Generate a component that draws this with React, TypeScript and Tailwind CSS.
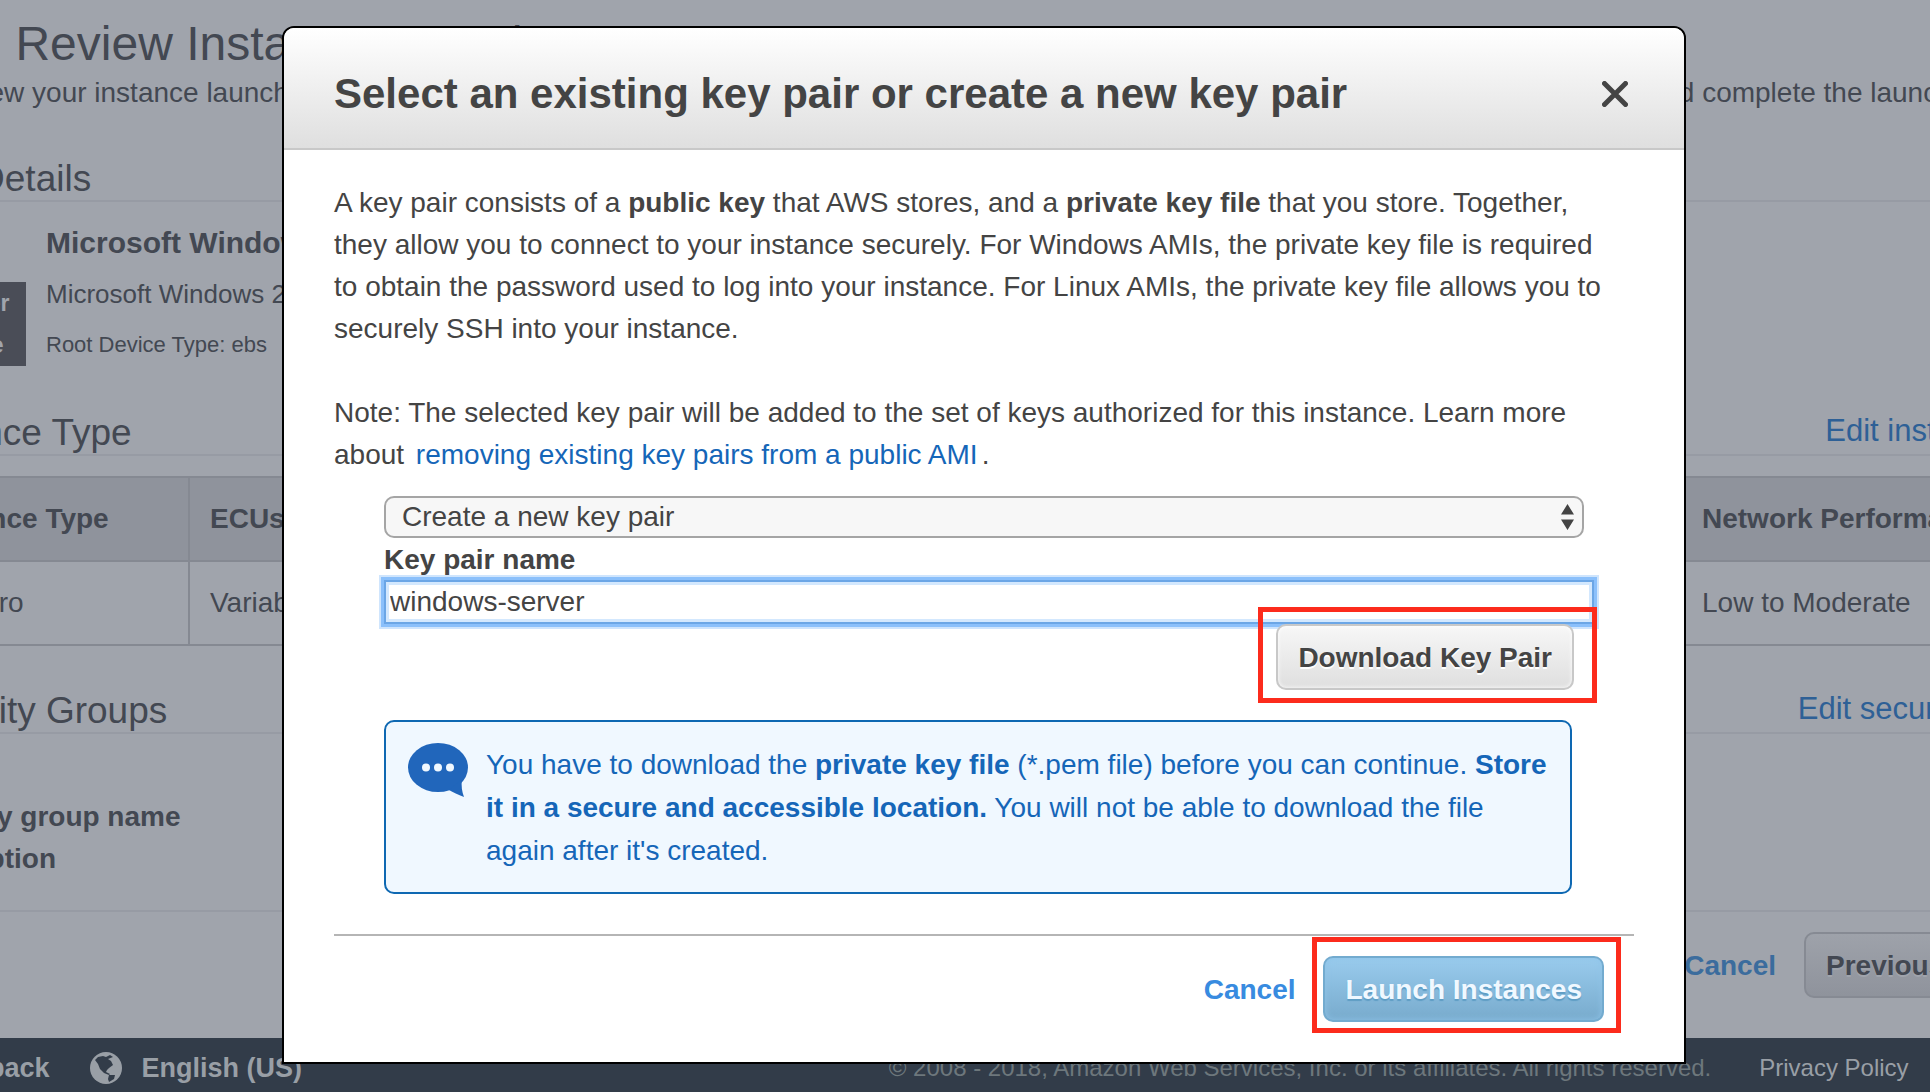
import type { ReactNode } from 'react';

const columns = [
  { label: 'Instance Type', value: 't2.micro', width: 'w-[286px]' },
  { label: 'ECUs', value: 'Variable', width: 'w-[200px]' },
  { label: 'vCPUs', value: '1', width: 'w-[200px]' },
  { label: 'Memory (GiB)', value: '1', width: 'w-[250px]' },
  { label: 'Instance Storage (GB)', value: 'EBS only', width: 'w-[400px]' },
  { label: 'EBS-Optimized Available', value: '-', width: 'w-[442px]' },
  { label: 'Network Performance', value: 'Low to Moderate', width: 'w-[390px]' },
];

function SectionHeading({ title, action }: { title: string; action?: string }) {
  return (
    <div className="flex h-[52px] items-end justify-between border-b-2 border-[#979ba4]">
      <h2 className="text-[37px] leading-[42px]">{title}</h2>
      {action && (
        <a href="#edit" className="text-[31px] leading-[46px] text-[#2e6096]">
          {action}
        </a>
      )}
    </div>
  );
}

function Highlight({ className, children }: { className: string; children: ReactNode }) {
  return (
    <div className="relative">
      {children}
      <div className={`pointer-events-none absolute border-5 border-[#fc2b1c] ${className}`} />
    </div>
  );
}

function CloseIcon() {
  return (
    <svg width="26" height="26" viewBox="0 0 26 26" fill="none" stroke="#444" strokeWidth="5" strokeLinecap="round">
      <path d="M2.500 2.500 23.500 23.500M23.500 2.500 2.500 23.500" />
    </svg>
  );
}

function SpeechIcon() {
  return (
    <svg width="60" height="54" viewBox="0 0 60 54" className="shrink-0">
      <ellipse cx="30" cy="24.500" rx="30" ry="24.500" fill="#2166bb" />
      <path d="M54 36C53 43 54 49 56 54C50 52 45 49 41 47Z" fill="#2166bb" />
      <g fill="#f0f8ff">
        <circle cx="18" cy="24.500" r="4" />
        <circle cx="30" cy="24.500" r="4" />
        <circle cx="42" cy="24.500" r="4" />
      </g>
    </svg>
  );
}

function GlobeIcon() {
  return (
    <svg width="32" height="32" viewBox="0 0 32 32">
      <circle cx="16" cy="16" r="16" fill="#999fa6" />
      <path
        d="M5 8 8 5 13 4 16 5 20 3 23 5 18 7 21 9 23 13 19 16 17 18 16 20 20 22 19 23 14 21 10 17 8 12Z"
        fill="#323c49"
      />
      <path d="M19 23 25 23 24 27 19 30 18 27Z" fill="#323c49" />
    </svg>
  );
}

function ReviewPage() {
  return (
    <div className="flex min-h-screen flex-col bg-[#a0a4ac] text-[#434852]">
      <main className="-mr-[140px] -ml-[150px]">
        <h1 className="pt-4 text-[48px] leading-[56px] whitespace-nowrap">Step 7: Review Instance Launch</h1>
        <p className="text-[28px] leading-[42px] whitespace-nowrap">
          Please review your instance launch details. You can go back to edit changes for each section. Click{' '}
          <b>Launch</b> to assign a key pair to your instance and complete the launch process.
        </p>

        <div className="pl-[52px]">
          <section className="h-[254px] pt-9">
            <SectionHeading title="AMI Details" />
            <div className="flex gap-5 pt-5">
              <div className="mt-[60px] flex h-[84px] w-[124px] shrink-0 items-center justify-center bg-[#4a4d57] text-center text-[23px] leading-[42px] font-bold text-[#a0a4ac]">
                Free tier
                <br />
                eligible
              </div>
              <div>
                <h3 className="text-[30px] leading-[42px] font-bold whitespace-nowrap">
                  Microsoft Windows Server 2016 Base
                </h3>
                <p className="pt-1 text-[26px] leading-[52px]">Microsoft Windows 2016 Datacenter edition.</p>
                <p className="text-[22px] leading-[50px]">Root Device Type: ebs</p>
              </div>
            </div>
          </section>

          <section className="pt-9">
            <SectionHeading title="Instance Type" action="Edit instance type" />
            <table className="mt-5 w-full table-fixed border-collapse border-y-2 border-[#858992] text-left text-[28px]">
              <thead className="bg-[#8f939c]">
                <tr>
                  {columns.map((column) => (
                    <th key={column.label} className={`h-[84px] border-2 border-[#858992] px-5 whitespace-nowrap ${column.width}`}>
                      {column.label}
                    </th>
                  ))}
                </tr>
              </thead>
              <tbody>
                <tr>
                  {columns.map((column) => (
                    <td key={column.label} className="h-[84px] border-2 border-[#858992] px-5">
                      {column.value}
                    </td>
                  ))}
                </tr>
              </tbody>
            </table>
          </section>

          <section className="pt-9">
            <SectionHeading title="Security Groups" action="Edit security groups" />
            <div className="h-[178px] border-b-2 border-[#979ba4] pt-[62px] text-[28px] leading-[42px] font-bold">
              <p>Security group name</p>
              <p>Description</p>
            </div>
          </section>
        </div>

        <div className="flex items-center justify-end gap-7 pt-5 text-[28px] font-bold">
          <a href="#cancel" className="pt-0.5 text-[#3b6c9d]">
            Cancel
          </a>
          <button className="h-[66px] w-[266px] rounded-[10px] border-2 border-[#868a93] bg-linear-to-b from-[#9ea2aa] to-[#8f939c] px-5 pt-0.5 text-left text-shadow-[0_2px_0_#a0a4ac]">
            Previous
          </button>
        </div>
      </main>

      <footer className="mt-auto -mr-[188px] -ml-[150px] flex h-[54px] items-center justify-between bg-[#323c49] pt-1.5 pr-5 pl-[75px] whitespace-nowrap text-[#999fa6]">
        <div className="flex items-center gap-10 text-[27px] font-bold">
          <a href="#feedback">Feedback</a>
          <a href="#language" className="flex items-center gap-5">
            <GlobeIcon />
            English (US)
          </a>
        </div>
        <div className="flex items-center gap-12 text-[24px]">
          <span className="text-[#6d777c]">
            © 2008 - 2018, Amazon Web Services, Inc. or its affiliates. All rights reserved.
          </span>
          <a href="#privacy">Privacy Policy</a>
          <a href="#terms">Terms of Use</a>
        </div>
      </footer>
    </div>
  );
}

function KeyPairDialog() {
  return (
    <div
      role="dialog"
      aria-labelledby="dialog-title"
      className="w-[1404px] max-w-full self-start rounded-t-[12px] border-2 border-black bg-white text-[28px] leading-[42px] text-[#444]"
    >
      <header className="flex h-[122px] items-center justify-between rounded-t-[10px] border-b-2 border-[#c8c8c8] bg-linear-to-b from-white to-[#dfdfdf] pt-3 pr-[56px] pl-[50px]">
        <h2 id="dialog-title" className="text-[42px] leading-[56px] font-bold">
          Select an existing key pair or create a new key pair
        </h2>
        <button aria-label="Close">
          <CloseIcon />
        </button>
      </header>

      <div className="px-[50px] pt-8">
        <p className="pr-5">
          A key pair consists of a <b>public key</b> that AWS stores, and a <b>private key file</b> that you store.
          Together, they allow you to connect to your instance securely. For Windows AMIs, the private key file is
          required to obtain the password used to log into your instance. For Linux AMIs, the private key file allows
          you to securely SSH into your instance.
        </p>
        <p className="pt-[42px] pr-5">
          Note: The selected key pair will be added to the set of keys authorized for this instance. Learn more about{' '}
          <a href="#remove" className="px-1 text-[#1566b8]">
            removing existing key pairs from a public AMI
          </a>
          .
        </p>

        <form className="flex flex-col pt-5 pr-10 pl-[50px]">
          <div className="relative mr-[10px]">
            <select
              aria-label="Key pair option"
              className="block h-[42px] w-full appearance-none rounded-[10px] border-2 border-[#a5a5a5] bg-[#f7f7f7] pl-4 leading-[36px]"
            >
              <option>Create a new key pair</option>
            </select>
            <svg className="pointer-events-none absolute top-2 right-[10px]" width="13" height="26" viewBox="0 0 13 26" fill="#444">
              <path d="M6.500 0 13 10.500H0ZM6.500 26 0 15.500H13Z" />
            </svg>
          </div>
          <label htmlFor="key-name" className="pt-0.5 leading-[40px] font-bold">
            Key pair name
          </label>
          <input
            id="key-name"
            defaultValue="windows-server"
            className="h-[44px] border-2 border-[#6ba6e6] px-1 shadow-[0_0_0_3px_#8bc0fb,0_0_0_5px_#cfe5fd,inset_0_0_0_3px_#d3e8fe] outline-none"
          />
          <div className="mr-5 flex justify-end">
            <Highlight className="-top-[17px] -right-[23px] -bottom-[13px] -left-[18px]">
              <button
                type="button"
                className="h-[66px] rounded-[10px] border-2 border-[#c8c8c8] bg-linear-to-b from-[#f7f7f7] to-[#dfdfdf] px-5 pt-0.5 font-bold shadow-[inset_0_0_4px_#fff] text-shadow-[0_2px_0_#fff]"
              >
                Download Key Pair
              </button>
            </Highlight>
          </div>
        </form>

        <div className="mt-[30px] mr-[62px] ml-[50px] flex h-[174px] gap-[18px] rounded-[10px] border-2 border-[#0e68b2] bg-[#f0f8ff] pt-[21px] pr-3 pl-[22px] text-[#1566b8]">
          <SpeechIcon />
          <p className="leading-[43px]">
            You have to download the <b>private key file</b> (*.pem file) before you can continue.{' '}
            <b>Store it in a secure and accessible location.</b> You will not be able to download the file again after
            it's created.
          </p>
        </div>

        <div className="mt-10 flex items-center justify-end gap-7 border-t-2 border-[#b5b5b5] pt-5 pr-[30px] pb-10 font-bold">
          <button className="pt-0.5 text-[#388be0]">Cancel</button>
          <Highlight className="-top-[19px] -right-[17px] -bottom-[11px] -left-[11px]">
            <button className="h-[66px] rounded-[10px] border-2 border-[#73abcf] bg-linear-to-b from-[#99cbed] to-[#78abcd] px-5 pt-0.5 text-[#f0f8ff] shadow-[inset_0_0_6px_#8fc4e8] text-shadow-[0_2px_1px_#5f9dc4]">
              Launch Instances
            </button>
          </Highlight>
        </div>
      </div>
    </div>
  );
}

export default function App() {
  return (
    <div className="relative overflow-hidden font-['Liberation_Sans',Arial,sans-serif]">
      <ReviewPage />
      <div className="absolute inset-0 flex justify-center pt-[26px] pl-[38px]">
        <KeyPairDialog />
      </div>
    </div>
  );
}
